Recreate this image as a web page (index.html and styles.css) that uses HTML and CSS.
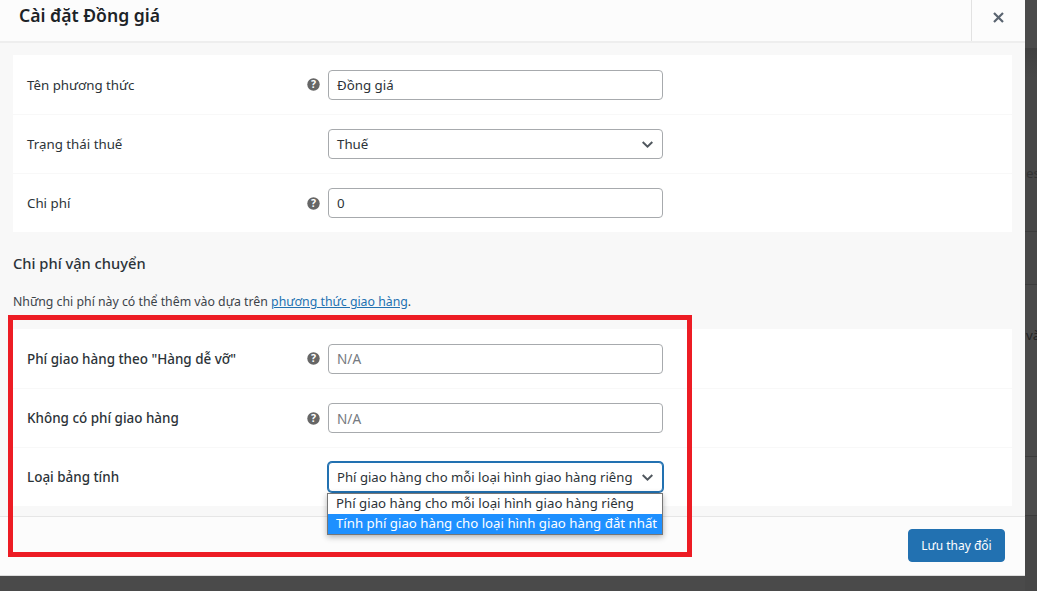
FILE: index.html
```html
<!DOCTYPE html>
<html lang="vi">
<head>
<meta charset="utf-8">
<title>Cài đặt Đồng giá</title>
<link rel="stylesheet" href="styles.css">
</head>
<body>
<div class="backdrop">
  <div class="strip">
    <div class="strip-top"></div>
    <div class="strip-a"><span class="strip-text faint">es</span></div>
    <div class="strip-e"></div>
    <div class="strip-b"><span class="strip-text">và</span></div>
    <div class="strip-c"></div>
    <div class="strip-d"></div>
  </div>
  <div class="modal">
    <header class="modal-head">
      <h1 class="modal-title">Cài đặt Đồng giá</h1>
      <button class="close" aria-label="Đóng">
        <svg width="11" height="11" viewBox="0 0 11 11"><path d="M1 1 10 10M10 1 1 10" stroke="#5a6470" stroke-width="2.2" fill="none"/></svg>
      </button>
    </header>
    <main class="modal-body">
      <section class="panel">
        <div class="row">
          <span class="label">Tên phương thức</span>
          <span class="tip"><svg width="13" height="13" viewBox="0 0 13 13"><circle cx="6.5" cy="6.5" r="6.2" fill="#666"/><text x="6.5" y="10.2" class="tip-q">?</text></svg></span>
          <div class="control"><span class="value">Đồng giá</span></div>
        </div>
        <div class="row">
          <span class="label">Trạng thái thuế</span>
          <span class="tip"></span>
          <div class="control"><span class="value">Thuế</span><svg class="chev" width="11" height="7" viewBox="0 0 11 7"><path d="M.7 1 5.5 5.6 10.3 1" stroke="#50575e" stroke-width="2" fill="none"/></svg></div>
        </div>
        <div class="row">
          <span class="label">Chi phí</span>
          <span class="tip"><svg width="13" height="13" viewBox="0 0 13 13"><circle cx="6.5" cy="6.5" r="6.2" fill="#666"/><text x="6.5" y="10.2" class="tip-q">?</text></svg></span>
          <div class="control"><span class="value">0</span></div>
        </div>
      </section>
      <h2 class="section-title">Chi phí vận chuyển</h2>
      <p class="note">Những chi phí này có thể thêm vào dựa trên <a href="#" class="link">phương thức giao hàng</a>.</p>
      <section class="panel">
        <div class="row">
          <span class="label strong">Phí giao hàng theo "Hàng dễ vỡ"</span>
          <span class="tip"><svg width="13" height="13" viewBox="0 0 13 13"><circle cx="6.5" cy="6.5" r="6.2" fill="#666"/><text x="6.5" y="10.2" class="tip-q">?</text></svg></span>
          <div class="control"><span class="value muted">N/A</span></div>
        </div>
        <div class="row">
          <span class="label strong">Không có phí giao hàng</span>
          <span class="tip"><svg width="13" height="13" viewBox="0 0 13 13"><circle cx="6.5" cy="6.5" r="6.2" fill="#666"/><text x="6.5" y="10.2" class="tip-q">?</text></svg></span>
          <div class="control"><span class="value muted">N/A</span></div>
        </div>
        <div class="row">
          <span class="label strong">Loại bảng tính</span>
          <span class="tip"></span>
          <div class="control focused"><span class="value select-value">Phí giao hàng cho mỗi loại hình giao hàng riêng</span><svg class="chev" width="11" height="7" viewBox="0 0 11 7"><path d="M.7 1 5.5 5.6 10.3 1" stroke="#50575e" stroke-width="2" fill="none"/></svg>
            <ul class="dropdown">
              <li class="option">Phí giao hàng cho mỗi loại hình giao hàng riêng</li>
              <li class="option selected">Tính phí giao hàng cho loại hình giao hàng đắt nhất</li>
            </ul>
          </div>
        </div>
      </section>
    </main>
    <footer class="modal-foot"><button class="save">Lưu thay đổi</button></footer>
  </div>
  <div class="highlight"></div>
</div>
</body>
</html>
```

FILE: styles.css
```css
* { box-sizing: border-box; }
html, body { margin: 0; height: 100%; }
body { font-family: "Noto Sans", "Open Sans", sans-serif; font-size: 13.3px; color: #2c3338; overflow: hidden; background: #4a4a4a; }
.backdrop { position: relative; width: 1037px; height: 591px; overflow: hidden; display: flex; flex-direction: row-reverse; justify-content: flex-end; }
.modal { width: 1025px; height: 575px; flex: none; display: flex; flex-direction: column; background: #fcfcfc; box-shadow: 0 1px 0 #ddd; }
.strip { width: 12px; height: 591px; flex: none; display: flex; flex-direction: column; font-size: 13.3px; color: #222; overflow: hidden; }
.strip-top { height: 48px; background: #4b4b4b; }
.strip-a { height: 184px; background: linear-gradient(#404040, #474747 30px); padding-top: 116px; border-bottom: 1px solid #3c3c3c; }
.strip-e { height: 53px; background: #484848; border-bottom: 1px solid #3c3c3c; }
.strip-b { height: 172px; background: #4a4a4a; border-bottom: 1px solid #3c3c3c; padding-top: 41px; }
.strip-c { height: 59px; background: #4c4c4c; border-bottom: 1px solid #3c3c3c; }
.strip-d { flex: 1; background: #474747; }
.strip-text { display: block; margin-left: 1px; line-height: 18px; white-space: nowrap; }
.faint { color: #333; }
.modal-head { height: 43px; flex: none; display: flex; justify-content: space-between; background: #fcfcfc; border-bottom: 2px solid #eeeeee; }
.modal-title { margin: 0 0 0 19px; font-size: 17.6px; line-height: 31px; font-weight: 600; color: #1d2327; }
.close { width: 54px; height: 41px; padding: 0 1px 6px 0; border: 0; border-left: 1px solid #e2e2e2; background: transparent; display: flex; align-items: center; justify-content: center; }
.modal-body { flex: 1; background: #f8f8f8; padding: 12px 13px 10px; min-height: 0; }
.panel { width: 999px; height: 177px; background: #fff; }
.row { height: 59px; display: flex; align-items: center; padding-left: 14px; border-top: 1px solid #f8f8f8; }
.row:first-child { border-top: 0; }
.label { width: 280px; flex: none; }
.strong { font-weight: 500; font-size: 13.45px; }
.tip { width: 21px; flex: none; display: flex; align-items: center; }
.tip-q { font: 700 10.5px "Noto Sans", sans-serif; fill: #fff; text-anchor: middle; }
.control { position: relative; width: 335px; height: 30px; flex: none; display: flex; align-items: center; justify-content: space-between; padding: 0 9px 0 8px; background: #fff; border: 1px solid #a7aaad; border-radius: 4px; }
.value { white-space: nowrap; color: #2c3338; }
.select-value { font-size: 13.15px; }
.muted { color: #757a80; font-size: 13.6px; }
.chev { flex: none; margin-left: 8px; }
.focused { border-color: #2271b1; box-shadow: 0 0 0 1px #2271b1; }
.section-title { margin: 21px 0 0; font-size: 14.7px; line-height: 20px; font-weight: 500; color: #2c3338; }
.note { margin: 19px 0 0; font-size: 12.3px; line-height: 20px; height: 37px; color: #3c434a; }
.link { color: #2271b1; }
.dropdown { position: absolute; left: -2px; top: 30px; width: 336px; margin: 0; padding: 0; list-style: none; background: #fff; border: 1px solid #767676; box-shadow: 0 2px 6px rgba(0,0,0,.3); z-index: 2; font-size: 13.25px; }
.option { height: 20px; line-height: 19px; padding-left: 8px; white-space: nowrap; color: #2c3338; }
.selected { background: #1e90ff; color: #fff; }
.modal-foot { height: 59px; flex: none; display: flex; justify-content: flex-end; align-items: flex-start; padding: 12px 20px 0 0; background: #fcfcfc; border-top: 1px solid #e6e6e6; }
.save { width: 97px; height: 33px; border: 1px solid #2271b1; border-radius: 4px; background: #2271b1; color: #fff; font: 12px "Noto Sans", sans-serif; }
.highlight { position: absolute; left: 8px; top: 315px; width: 684px; height: 242px; border: 5px solid #ed1c24; pointer-events: none; z-index: 3; }
```
